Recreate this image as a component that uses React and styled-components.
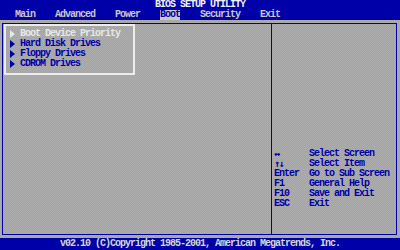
import React from "react";
import styled, { createGlobalStyle } from "styled-components";

const Global = createGlobalStyle`
  html, body {
    margin: 0;
    padding: 0;
    width: 400px;
    height: 250px;
    overflow: hidden;
    background: #a8a8a8;
  }
`;

const BLUE = "#0000a8";

const Screen = styled.div`
  width: 400px;
  height: 250px;
  display: flex;
  flex-direction: column;
  font-family: "Liberation Mono", "DejaVu Sans Mono", monospace;
  font-weight: bold;
  font-size: 10px;
  letter-spacing: -1px;
  line-height: 10px;
`;

const Header = styled.div`
  background: ${BLUE};
  height: 20px;
  display: flex;
  flex-direction: column;
`;

const Title = styled.div`
  height: 10px;
  text-align: center;
  color: #f0f0f0;
`;

const Menu = styled.div`
  height: 10px;
  display: flex;
  gap: 20px;
  padding-left: 15px;
`;

const Tab = styled.span`
  color: ${(p) => (p.active ? BLUE : "#c8c8c8")};
  background: ${(p) => (p.active ? "#c8c8c8" : "transparent")};
  height: 10px;
`;

const Body = styled.div`
  flex: 1;
  background: repeating-conic-gradient(#a4a4a4 0 25%, #adadad 0 50%) 0 0 / 2px 2px;
  padding: 3px 3px 3px 2px;
  display: flex;
`;

const Frame = styled.div`
  flex: 1;
  border: 1px solid ${BLUE};
  display: grid;
  grid-template-columns: 1fr 124px;
`;

const LeftPanel = styled.div`
  border-right: 1px solid ${BLUE};
  padding-left: 1px;
`;

const ItemBox = styled.div`
  width: 127px;
  height: 44px;
  border: 2px solid #ececec;
  padding-top: 3px;
  box-sizing: content-box;
`;

const Item = styled.div`
  display: flex;
  align-items: center;
  height: 10px;
  padding-left: 4px;
  color: ${(p) => (p.active ? "#e8e8e8" : BLUE)};
`;

const Arrow = styled.span`
  width: 0;
  height: 0;
  border-top: 4px solid transparent;
  border-bottom: 4px solid transparent;
  border-left: 5px solid ${(p) => (p.active ? "#e8e8e8" : BLUE)};
  margin-right: 5px;
`;

const RightPanel = styled.div`
  display: flex;
  flex-direction: column;
  justify-content: flex-end;
  padding: 0 0 25px 2px;
`;

const HelpRow = styled.div`
  display: flex;
  height: 10px;
  color: ${BLUE};
`;

const Key = styled.span`
  width: 35px;
  height: 10px;
  flex-shrink: 0;
  overflow: hidden;
  font-family: ${(p) => (p.glyph ? '"DejaVu Sans Mono", monospace' : "inherit")};
  letter-spacing: ${(p) => (p.glyph ? "-1.5px" : "inherit")};
`;

const Footer = styled.div`
  background: ${BLUE};
  height: 12px;
  line-height: 12px;
  text-align: center;
  color: #d8d8d8;
`;

const tabs = ["Main", "Advanced", "Power", "Boot", "Security", "Exit"];
const items = ["Boot Device Priority", "Hard Disk Drives", "Floppy Drives", "CDROM Drives"];
const help = [
  ["↔", "Select Screen", true],
  ["↑↓", "Select Item", true],
  ["Enter", "Go to Sub Screen"],
  ["F1", "General Help"],
  ["F10", "Save and Exit"],
  ["ESC", "Exit"],
];

export default function App() {
  return (
    <>
      <Global />
      <Screen>
        <Header>
          <Title>BIOS SETUP UTILITY</Title>
          <Menu>
            {tabs.map((t) => (
              <Tab key={t} active={t === "Boot"}>
                {t}
              </Tab>
            ))}
          </Menu>
        </Header>
        <Body>
          <Frame>
            <LeftPanel>
              <ItemBox>
                {items.map((it, i) => (
                  <Item key={it} active={i === 0}>
                    <Arrow active={i === 0} />
                    {it}
                  </Item>
                ))}
              </ItemBox>
            </LeftPanel>
            <RightPanel>
              {help.map(([k, d, g]) => (
                <HelpRow key={k}>
                  <Key glyph={g}>{k}</Key>
                  <span>{d}</span>
                </HelpRow>
              ))}
            </RightPanel>
          </Frame>
        </Body>
        <Footer>v02.10 (C)Copyright 1985-2001, American Megatrends, Inc.</Footer>
      </Screen>
    </>
  );
}
